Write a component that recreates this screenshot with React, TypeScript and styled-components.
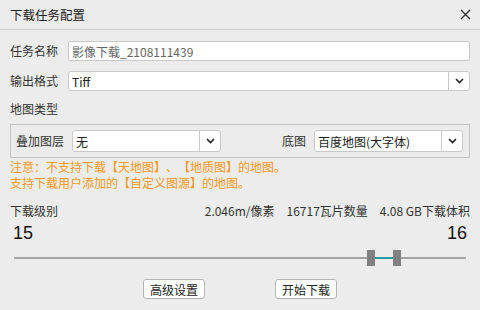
import styled, { createGlobalStyle } from "styled-components";

const GlobalStyle = createGlobalStyle`
  html, body {
    margin: 0;
    padding: 0;
    background: #ececec;
  }
  * {
    box-sizing: border-box;
  }
`;

const FONT = `"Microsoft YaHei", "Noto Sans CJK SC", "Noto Sans", sans-serif`;

const Dialog = styled.div`
  width: 480px;
  height: 310px;
  background: #ececec;
  display: flex;
  flex-direction: column;
  font-family: ${FONT};
  font-size: 12px;
  color: #333333;
  overflow: hidden;
  text-spacing-trim: space-all;
`;

const TitleBar = styled.div`
  height: 30px;
  flex-shrink: 0;
  display: flex;
  align-items: center;
  justify-content: space-between;
  padding: 0 9px 1px 10px;
  border-bottom: 1px solid #cfcfcf;
`;

const Title = styled.span`
  font-size: 12.5px;
  color: #222222;
`;

const CloseButton = styled.button`
  width: 12px;
  height: 12px;
  padding: 0;
  border: none;
  background: none;
  display: flex;
  align-items: center;
  justify-content: center;
  cursor: pointer;
`;

const Body = styled.div`
  padding: 11px 10px 0;
  display: flex;
  flex-direction: column;
`;

const FormRow = styled.div<{ $gap?: number }>`
  display: flex;
  align-items: center;
  height: 20px;
  margin-top: ${({ $gap }) => $gap ?? 0}px;
`;

const Label = styled.span<{ $width?: number }>`
  width: ${({ $width }) => ($width ? `${$width}px` : "auto")};
  flex-shrink: 0;
  white-space: nowrap;
  color: #333333;
  line-height: 16px;
`;

const TextInput = styled.div`
  flex: 1;
  height: 20px;
  background: #ffffff;
  border: 1px solid #c9c9c9;
  border-radius: 2px;
  display: flex;
  align-items: center;
  padding: 0 3px;
  color: #666666;
  font-size: 12px;
`;

const Select = styled.div<{ $width?: number; $height?: number }>`
  ${({ $width }) => ($width ? `width: ${$width}px;` : "flex: 1;")}
  height: ${({ $height }) => $height ?? 20}px;
  flex-shrink: 0;
  background: #ffffff;
  border: 1px solid #c9c9c9;
  border-radius: 3px;
  display: flex;
  align-items: stretch;
`;

const SelectValue = styled.span`
  flex: 1;
  display: flex;
  align-items: center;
  padding: 0 3px;
  color: #222222;
  white-space: nowrap;
  overflow: hidden;
`;

const SelectArrow = styled.span`
  width: 21px;
  border-left: 1px solid #c9c9c9;
  display: flex;
  align-items: center;
  justify-content: center;
`;

const SectionLabel = styled.div<{ $gap: number }>`
  margin-top: ${({ $gap }) => $gap}px;
  line-height: 16px;
  color: #333333;
`;

const GroupBox = styled.div`
  margin-top: 7px;
  height: 34px;
  border: 1px solid #c4c4c4;
  display: flex;
  align-items: center;
  justify-content: space-between;
  padding: 0 6px 0 5px;
`;

const GroupField = styled.div<{ $gap: number }>`
  display: flex;
  align-items: center;
  gap: ${({ $gap }) => $gap}px;
`;

const Notes = styled.div`
  margin-top: 1px;
  color: #f39a1c;
  line-height: 16px;
  white-space: nowrap;
`;

const LevelHeader = styled.div`
  margin-top: 12px;
  display: flex;
  justify-content: space-between;
  line-height: 16px;
`;

const Stats = styled.div`
  display: flex;
  gap: 12px;
  color: #333333;
`;

const LevelValues = styled.div`
  margin-top: 4px;
  height: 20px;
  display: flex;
  justify-content: space-between;
  align-items: center;
  padding: 0 3px;
  font-family: "Liberation Sans", Arial, sans-serif;
  font-size: 18px;
  color: #111111;
`;

const Slider = styled.div`
  position: relative;
  margin: 7px 4px 0;
  height: 16px;
  display: flex;
  align-items: center;
`;

const Track = styled.div`
  flex: 1;
  height: 2px;
  background: #a3a3a3;
`;

const Range = styled.div`
  position: absolute;
  top: 7px;
  height: 2px;
  background: #2a9c9e;
`;

const Handle = styled.div`
  position: absolute;
  top: 0;
  width: 8px;
  height: 16px;
  background: #808080;
`;

const Actions = styled.div`
  margin-top: 13px;
  display: flex;
  justify-content: center;
  gap: 70px;
`;

const Button = styled.button`
  width: 62px;
  height: 20px;
  padding: 0;
  background: #ffffff;
  border: 1px solid #b5b5b5;
  border-radius: 3px;
  font-family: ${FONT};
  font-size: 12px;
  color: #222222;
  display: flex;
  align-items: center;
  justify-content: center;
`;

const Chevron = () => (
  <svg width="9" height="6" viewBox="0 0 9 6">
    <polyline points="1,1 4.5,4.5 8,1" fill="none" stroke="#222" strokeWidth="1.6" />
  </svg>
);

const CloseIcon = () => (
  <svg width="11" height="11" viewBox="0 0 11 11">
    <path d="M1 1 L10 10 M10 1 L1 10" stroke="#333" strokeWidth="1.4" />
  </svg>
);

// pixel offsets of the two level handles along the track
const HANDLE_W = 8;
const startX = 353;
const endX = 379;

export default function App() {
  const start = 15;
  const end = 16;

  return (
    <>
      <GlobalStyle />
      <Dialog>
        <TitleBar>
          <Title>下载任务配置</Title>
          <CloseButton aria-label="关闭">
            <CloseIcon />
          </CloseButton>
        </TitleBar>
        <Body>
          <FormRow>
            <Label $width={58}>任务名称</Label>
            <TextInput>影像下载_2108111439</TextInput>
          </FormRow>
          <FormRow $gap={10}>
            <Label $width={58}>输出格式</Label>
            <Select>
              <SelectValue>Tiff</SelectValue>
              <SelectArrow>
                <Chevron />
              </SelectArrow>
            </Select>
          </FormRow>

          <SectionLabel $gap={10}>地图类型</SectionLabel>
          <GroupBox>
            <GroupField $gap={8}>
              <Label>叠加图层</Label>
              <Select $width={149} $height={22}>
                <SelectValue>无</SelectValue>
                <SelectArrow>
                  <Chevron />
                </SelectArrow>
              </Select>
            </GroupField>
            <GroupField $gap={8}>
              <Label>底图</Label>
              <Select $width={149} $height={22}>
                <SelectValue>百度地图(大字体)</SelectValue>
                <SelectArrow>
                  <Chevron />
                </SelectArrow>
              </Select>
            </GroupField>
          </GroupBox>

          <Notes>
            注意：不支持下载【天地图】、【地质图】的地图。
            <br />
            支持下载用户添加的【自定义图源】的地图。
          </Notes>

          <LevelHeader>
            <span>下载级别</span>
            <Stats>
              <span>2.046m/像素</span>
              <span>16717瓦片数量</span>
              <span>4.08 GB下载体积</span>
            </Stats>
          </LevelHeader>
          <LevelValues>
            <span>{start}</span>
            <span>{end}</span>
          </LevelValues>
          <Slider>
            <Track />
            <Range style={{ left: startX + HANDLE_W, width: endX - startX - HANDLE_W }} />
            <Handle style={{ left: startX }} />
            <Handle style={{ left: endX }} />
          </Slider>

          <Actions>
            <Button>高级设置</Button>
            <Button>开始下载</Button>
          </Actions>
        </Body>
      </Dialog>
    </>
  );
}
